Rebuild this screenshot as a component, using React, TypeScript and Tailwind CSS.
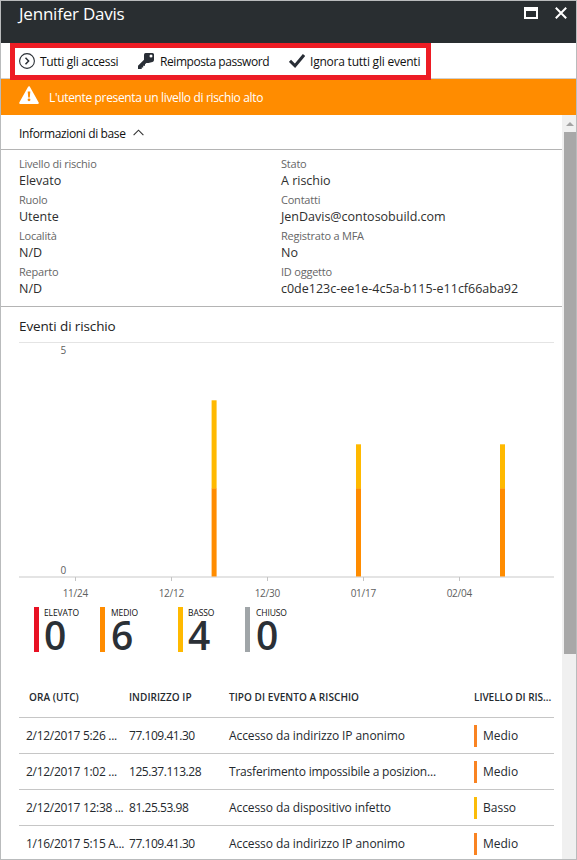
import type { ReactNode } from "react";

type Field = { label: string; value: string };

const leftFields: Field[] = [
  { label: "Livello di rischio", value: "Elevato" },
  { label: "Ruolo", value: "Utente" },
  { label: "Località", value: "N/D" },
  { label: "Reparto", value: "N/D" },
];

const rightFields: Field[] = [
  { label: "Stato", value: "A rischio" },
  { label: "Contatti", value: "JenDavis@contosobuild.com" },
  { label: "Registrato a MFA", value: "No" },
  { label: "ID oggetto", value: "c0de123c-ee1e-4c5a-b115-e11cf66aba92" },
];

const counters = [
  { label: "ELEVATO", value: 0, color: "bg-[#e81123]", box: "w-[66px]", pad: "pl-[5px]" },
  { label: "MEDIO", value: 6, color: "bg-[#ff8c00]", box: "w-[78px]", pad: "pl-[6px]" },
  { label: "BASSO", value: 4, color: "bg-[#ffb900]", box: "w-[67px]", pad: "pl-[5px]" },
  { label: "CHIUSO", value: 0, color: "bg-[#a0a5a8]", box: "w-[66px]", pad: "pl-[6px]" },
];

const events = [
  { time: "2/12/2017 5:26 ...", ip: "77.109.41.30", type: "Accesso da indirizzo IP anonimo", level: "Medio", bar: "bg-[#f98322]", track: "tracking-[-0.09px]" },
  { time: "2/12/2017 1:02 ...", ip: "125.37.113.28", type: "Trasferimento impossibile a posizion...", level: "Medio", bar: "bg-[#f98322]", track: "tracking-[-0.2px]" },
  { time: "2/12/2017 12:38 ...", ip: "81.25.53.98", type: "Accesso da dispositivo infetto", level: "Basso", bar: "bg-[#fbbc09]", track: "tracking-[-0.09px]" },
  { time: "1/16/2017 5:15 A...", ip: "77.109.41.30", type: "Accesso da indirizzo IP anonimo", level: "Medio", bar: "bg-[#f98322]", track: "tracking-[-0.09px]" },
];

function FieldColumn({ fields, className }: { fields: Field[]; className: string }) {
  return (
    <dl className={className}>
      {fields.map((f) => (
        <div key={f.label} className="h-9">
          <dt className="h-4 text-[11px] leading-4 tracking-[-0.22px] text-[#666]">{f.label}</dt>
          <dd className="h-5 text-[12.5px] leading-[18px] tracking-[-0.01px] text-[#2e2e2e]">{f.value}</dd>
        </div>
      ))}
    </dl>
  );
}

function ToolButton({ icon, label, className }: { icon: ReactNode; label: string; className: string }) {
  return (
    <button className={`flex shrink-0 items-center text-[12px] leading-4 text-[#111] ${className}`}>
      {icon}
      <span className="pt-[2px]">{label}</span>
    </button>
  );
}

function Chart() {
  const bars = [
    { x: 192.6, top: 58, w: 5 },
    { x: 337, top: 102, w: 5 },
    { x: 481, top: 102, w: 5 },
  ];
  const ticks = [
    { x: 56, label: "11/24" },
    { x: 152, label: "12/12" },
    { x: 248, label: "12/30" },
    { x: 344, label: "01/17" },
    { x: 440, label: "02/04" },
  ];
  return (
    <svg width="535" height="264" viewBox="0 0 535 264" className="block">
      <rect width="535" height="1" y="0" fill="#e4e4e4" />
      <rect width="535" height="2" y="234" fill="#e4e4e4" />
      <g fontSize="10" fill="#606060" textAnchor="middle">
        <text x="44.4" y="12">5</text>
        <text x="44.4" y="232">0</text>
        {ticks.map((t) => (
          <text key={t.label} x={t.x + 0.4} y="255" textLength="25.5">{t.label}</text>
        ))}
      </g>
      {ticks.map((t) => (
        <rect key={t.label} x={t.x} y="235" width="1" height="4" fill="#c4c4c4" />
      ))}
      {bars.map((b) => (
        <g key={b.x}>
          <rect x={b.x} y={b.top + 0.3} width={b.w} height={146.5 - b.top} fill="#ffb900" />
          <rect x={b.x} y="146.5" width={b.w} height="88" fill="#ff8c00" />
        </g>
      ))}
    </svg>
  );
}

export default function App() {
  return (
    <div className="relative flex h-[860px] w-[577px] flex-col overflow-hidden border border-[#b9bbbc] bg-white font-['Open_Sans','Noto_Sans',sans-serif]">
      <header className="flex h-[42px] shrink-0 justify-between bg-[#292e31] pl-[18px] pr-[9px] text-white">
        <h1 className="text-[17px] font-normal leading-[26px] tracking-[-0.22px]">Jennifer Davis</h1>
        <div className="flex gap-[17px] pt-[6px]">
          <svg width="14" height="12" viewBox="0 0 14 12">
            <path fill="#fff" fillRule="evenodd" d="M0 0h14v12H0zM2 4v6h10V4z" />
          </svg>
          <svg width="12" height="12" viewBox="0 0 12 12">
            <path d="M.8.8l10.4 10.4M11.2.8L.8 11.2" stroke="#fff" strokeWidth="2" />
          </svg>
        </div>
      </header>

      <div className="flex h-9 shrink-0 items-center border-b border-[#cfcfcf] pl-[18px]">
        <ToolButton
          label="Tutti gli accessi"
          className="w-[119px] gap-[5px] tracking-[-0.32px]"
          icon={
            <svg width="16" height="16" viewBox="0 0 16 16" fill="none" stroke="#2b3036">
              <circle cx="8" cy="8" r="7.4" strokeWidth="1.1" />
              <path d="M6.5 4.8L9.6 8l-3.1 3.2" strokeWidth="1.5" />
            </svg>
          }
        />
        <ToolButton
          label="Reimposta password"
          className="w-[151px] gap-[6px] tracking-[-0.43px]"
          icon={
            <svg width="16" height="16" viewBox="0 0 16 16">
              <path
                fill="#292e36"
                fillRule="evenodd"
                d="M7.6 0H14.5q1.5 0 1.5 1.500V7q0 1.500-1.500 2l-4 .9H8.400L7 11.300v1.500H5.200v1.700H3.700V16H0v-3.200l6-6V2q0-2 1.600-2zM13 1.500a1.500 1.500 0 1 0 0 3 1.500 1.500 0 0 0 0-3z"
              />
            </svg>
          }
        />
        <ToolButton
          label="Ignora tutti gli eventi"
          className="gap-[5px] tracking-[-0.22px]"
          icon={
            <svg width="16" height="14" viewBox="0 0 16 14">
              <path d="M1 6.800l5 5L15 1" fill="none" stroke="#292e36" strokeWidth="3" />
            </svg>
          }
        />
      </div>
      <div className="absolute left-[9px] top-[42px] h-[37px] w-[421px] border-[5px] border-[#ed1c24]" />

      <div className="flex h-9 shrink-0 items-center gap-[10px] bg-[#ff8c00] pl-[18px] text-white">
        <svg width="20" height="18" viewBox="0 0 20 18" className="mb-1">
          <path d="M10 1.200L18.800 17H1.200z" fill="#fff" stroke="#fff" strokeWidth="2" strokeLinejoin="round" />
          <path d="M8.700 5.500h2.600l-.5 6H9.200z" fill="#ff8c00" />
          <circle cx="10" cy="13.800" r="1.400" fill="#ff8c00" />
        </svg>
        <p className="pt-[2px] text-[12px] leading-4 tracking-[-0.35px]">L'utente presenta un livello di rischio alto</p>
      </div>

      <div className="flex min-h-0 flex-1">
        <main className="w-[561px] shrink-0 overflow-hidden">
          <button className="flex h-[35px] w-full items-center gap-[7px] border-b border-[#b4b4b4] pl-[18px] pt-[3px] text-[12px] tracking-[-0.37px] text-[#111]">
            <span>Informazioni di base</span>
            <svg width="11" height="7" viewBox="0 0 11 7" className="mb-[2px]">
              <path d="M.6 6.200l4.900-5 4.900 5" fill="none" stroke="#333" strokeWidth="1.100" />
            </svg>
          </button>

          <section className="flex h-[157px] border-b border-[#b4b4b4] pl-[18px] pt-[6px]">
            <FieldColumn fields={leftFields} className="w-[262px]" />
            <FieldColumn fields={rightFields} className="flex-1" />
          </section>

          <section className="pl-[18px]">
            <h2 className="h-[35px] text-[13.5px] font-normal leading-[38px] tracking-[-0.12px] text-[#222]">Eventi di rischio</h2>
            <Chart />
            <div className="mt-px flex h-[45px] pl-[15px]">
              {counters.map((c) => (
                <div key={c.label} className={`flex shrink-0 ${c.box}`}>
                  <div className={`h-[45px] w-[5px] shrink-0 ${c.color}`} />
                  <div className={c.pad}>
                    <div className="h-[11px] text-[8.5px] leading-[11px] tracking-[-0.1px] text-[#111]">{c.label}</div>
                    <div className="text-[39px] font-semibold leading-[34px] tracking-tight text-[#2b3036]">{c.value}</div>
                  </div>
                </div>
              ))}
            </div>

            <div className="mt-[27px] w-[535px] text-[#24292e]">
              <div className="grid h-[39px] grid-cols-[110px_100px_245px_80px] items-center border-b border-[#c6c6c6] pb-[2px] text-[10px] font-semibold tracking-[0.06px]">
                <div className="pl-[10px]">ORA (UTC)</div>
                <div>INDIRIZZO IP</div>
                <div>TIPO DI EVENTO A RISCHIO</div>
                <div className="whitespace-nowrap tracking-[-0.04px]">LIVELLO DI RIS...</div>
              </div>
              {events.map((e, i) => (
                <div
                  key={i}
                  className="grid h-9 grid-cols-[110px_100px_245px_80px] items-center border-b border-[#c6c6c6] text-[12px] last:border-b-0"
                >
                  <div className="whitespace-nowrap pl-[7px] tracking-[-0.3px]">{e.time}</div>
                  <div className="tracking-[-0.46px]">{e.ip}</div>
                  <div className={`whitespace-nowrap ${e.track}`}>{e.type}</div>
                  <div className="flex items-center gap-[6px]">
                    <span className={`h-[22px] w-[3px] ${e.bar}`} />
                    <span>{e.level}</span>
                  </div>
                </div>
              ))}
            </div>
          </section>
        </main>

        <div className="flex w-[14px] flex-col items-end bg-[#f0f0f0]">
          <div className="flex h-[17px] w-3 shrink-0 items-center justify-center">
            <svg width="8" height="4" viewBox="0 0 8 4">
              <path d="M0 4l4-4 4 4z" fill="#a3a3a3" />
            </svg>
          </div>
          <div className="h-[522px] w-3 bg-[#a8a8a8]" />
        </div>
      </div>
    </div>
  );
}
